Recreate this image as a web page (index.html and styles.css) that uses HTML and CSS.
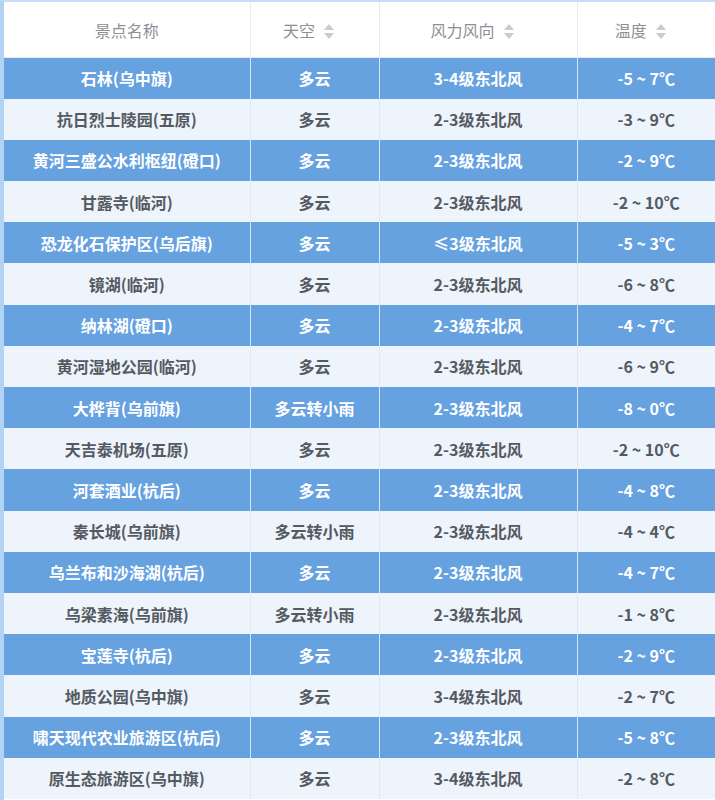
FILE: index.html
```html
<!DOCTYPE html>
<html lang="zh">
<head>
<meta charset="utf-8">
<link rel="stylesheet" href="styles.css">
</head>
<body>
<div class="wrap">
<table class="grid">
<colgroup><col class="c1"><col class="c2"><col class="c3"><col class="c4"></colgroup>
<thead>
<tr>
<th>景点名称</th>
<th class="sortable">天空<span class="sort"><i class="up"></i><i class="down"></i></span></th>
<th class="sortable">风力风向<span class="sort"><i class="up"></i><i class="down"></i></span></th>
<th class="sortable">温度<span class="sort"><i class="up"></i><i class="down"></i></span></th>
</tr>
</thead>
<tbody>
<tr class="hl"><td>石林(乌中旗)</td><td>多云</td><td>3-4级东北风</td><td>-5 ~ 7℃</td></tr>
<tr><td>抗日烈士陵园(五原)</td><td>多云</td><td>2-3级东北风</td><td>-3 ~ 9℃</td></tr>
<tr class="hl"><td>黄河三盛公水利枢纽(磴口)</td><td>多云</td><td>2-3级东北风</td><td>-2 ~ 9℃</td></tr>
<tr><td>甘露寺(临河)</td><td>多云</td><td>2-3级东北风</td><td>-2 ~ 10℃</td></tr>
<tr class="hl"><td>恐龙化石保护区(乌后旗)</td><td>多云</td><td>≤3级东北风</td><td>-5 ~ 3℃</td></tr>
<tr><td>镜湖(临河)</td><td>多云</td><td>2-3级东北风</td><td>-6 ~ 8℃</td></tr>
<tr class="hl"><td>纳林湖(磴口)</td><td>多云</td><td>2-3级东北风</td><td>-4 ~ 7℃</td></tr>
<tr><td>黄河湿地公园(临河)</td><td>多云</td><td>2-3级东北风</td><td>-6 ~ 9℃</td></tr>
<tr class="hl"><td>大桦背(乌前旗)</td><td>多云转小雨</td><td>2-3级东北风</td><td>-8 ~ 0℃</td></tr>
<tr><td>天吉泰机场(五原)</td><td>多云</td><td>2-3级东北风</td><td>-2 ~ 10℃</td></tr>
<tr class="hl"><td>河套酒业(杭后)</td><td>多云</td><td>2-3级东北风</td><td>-4 ~ 8℃</td></tr>
<tr><td>秦长城(乌前旗)</td><td>多云转小雨</td><td>2-3级东北风</td><td>-4 ~ 4℃</td></tr>
<tr class="hl"><td>乌兰布和沙海湖(杭后)</td><td>多云</td><td>2-3级东北风</td><td>-4 ~ 7℃</td></tr>
<tr><td>乌梁素海(乌前旗)</td><td>多云转小雨</td><td>2-3级东北风</td><td>-1 ~ 8℃</td></tr>
<tr class="hl"><td>宝莲寺(杭后)</td><td>多云</td><td>2-3级东北风</td><td>-2 ~ 9℃</td></tr>
<tr><td>地质公园(乌中旗)</td><td>多云</td><td>3-4级东北风</td><td>-2 ~ 7℃</td></tr>
<tr class="hl"><td>啸天现代农业旅游区(杭后)</td><td>多云</td><td>2-3级东北风</td><td>-5 ~ 8℃</td></tr>
<tr><td>原生态旅游区(乌中旗)</td><td>多云</td><td>3-4级东北风</td><td>-2 ~ 8℃</td></tr>
</tbody>
</table>
</div>
</body>
</html>
```
FILE: styles.css
```css
html, body {
  margin: 0;
  padding: 0;
  background: #ffffff;
}
.wrap {
  width: 715px;
  height: 800px;
  overflow: hidden;
  border-left: 4px solid #b3d3f5;
  border-top: 2px solid #c6def7;
  box-sizing: border-box;
}
.grid {
  width: 711px;
  border-collapse: collapse;
  table-layout: fixed;
  font-family: "Microsoft YaHei", "Noto Sans CJK SC", "Noto Sans", sans-serif;
  font-size: 16px;
}
.c1 { width: 246px; }
.c2 { width: 129px; }
.c3 { width: 198px; }
.c4 { width: 138px; }
th {
  height: 55px;
  padding: 0;
  background: #ffffff;
  color: #8d9097;
  font-weight: normal;
  text-align: center;
  border-right: 1px solid #e6ebf1;
  border-bottom: 1px solid #e6ebf1;
}
th.sortable { padding-right: 12px; }
th:last-child, td:last-child { border-right: none; }
td {
  height: 41.2px;
  padding: 0;
  text-align: center;
  font-weight: bold;
  color: #555a60;
  background: #edf4fc;
  border-right: 1px solid #dfe9f5;
  box-sizing: border-box;
}
tr.hl td {
  background: #66a1e0;
  color: #ffffff;
  border-right-color: #d4e6f9;
}
.sort {
  display: inline-flex;
  flex-direction: column;
  gap: 3px;
  vertical-align: middle;
  margin-left: 9px;
  margin-top: -2px;
}
.sort i {
  width: 0;
  height: 0;
  border-left: 5px solid transparent;
  border-right: 5px solid transparent;
}
.sort .up { border-bottom: 6px solid #c8cbd1; }
.sort .down { border-top: 6px solid #c8cbd1; }
```
